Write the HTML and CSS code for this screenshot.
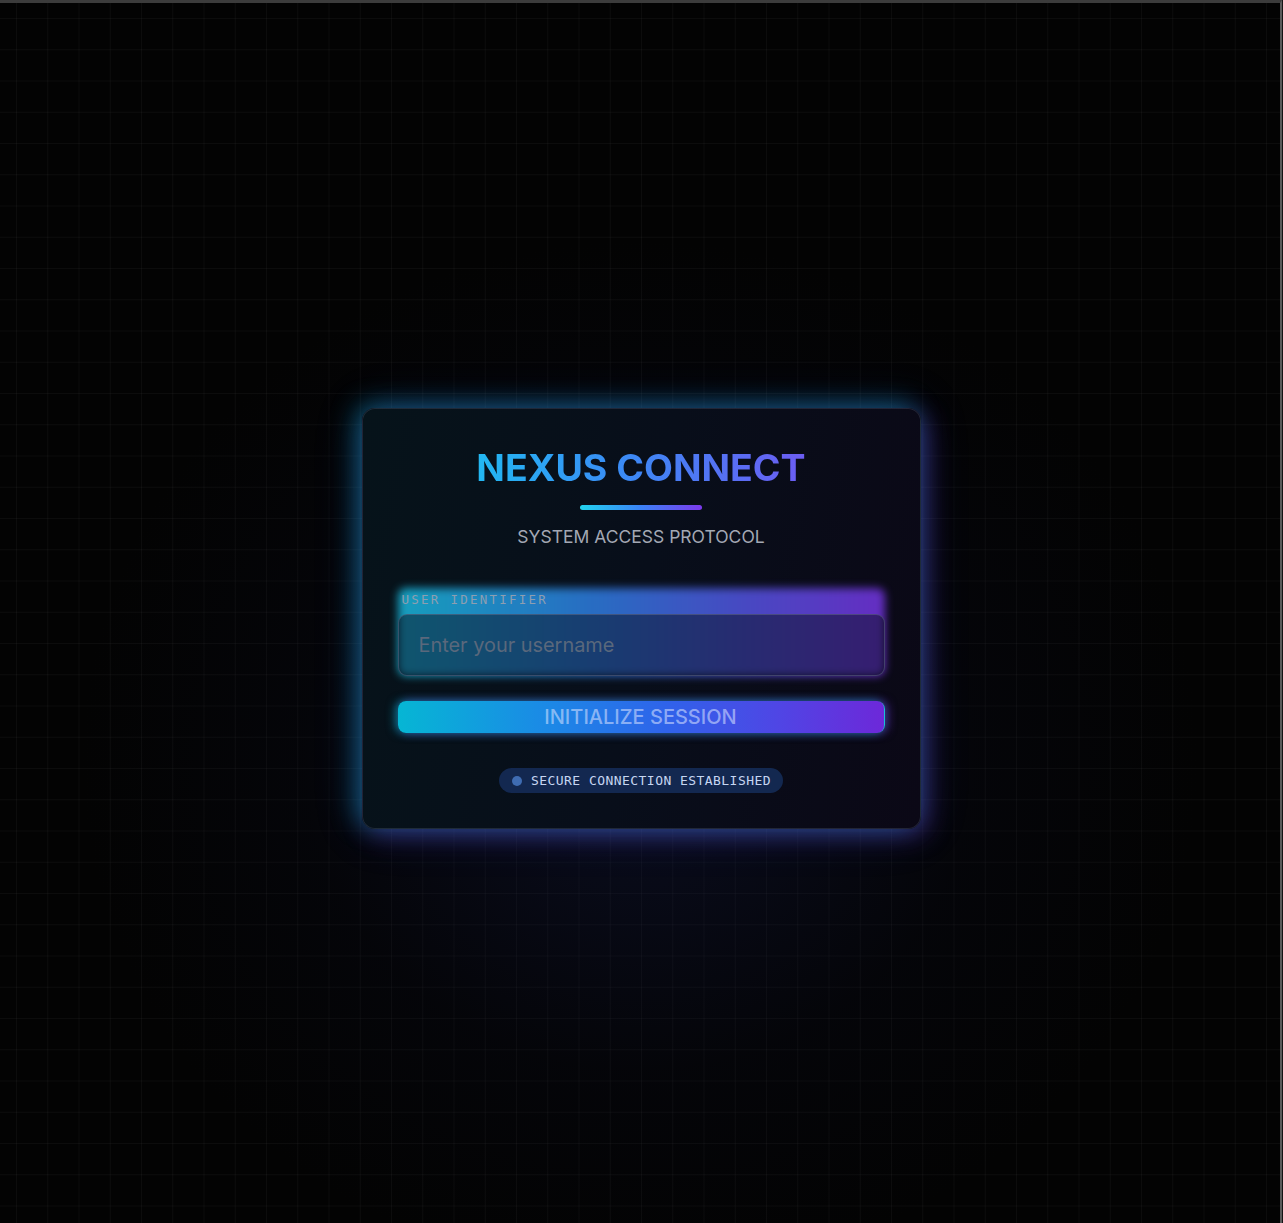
FILE: index.html
```html
<!DOCTYPE html>
<html lang="en">
<head>
<meta charset="utf-8">
<title>Nexus Connect</title>
<link rel="stylesheet" href="styles.css">
</head>
<body>
<div class="screen">
  <main class="card">
    <h1 class="title">NEXUS CONNECT</h1>
    <div class="divider"></div>
    <p class="subtitle">SYSTEM ACCESS PROTOCOL</p>
    <form class="form">
      <div class="field">
        <div class="field-glow"></div>
        <label class="label" for="user">USER IDENTIFIER</label>
        <input class="input" id="user" type="text" placeholder="Enter your username">
      </div>
      <button class="btn" type="button">INITIALIZE SESSION</button>
    </form>
    <div class="status">
      <span class="status-dot"></span>
      <span class="status-text">SECURE CONNECTION ESTABLISHED</span>
    </div>
  </main>
</div>
</body>
</html>
```
FILE: styles.css
```css
* { box-sizing: border-box; }
html, body { margin: 0; height: 100%; }
body {
  background: #141414;
  padding-right: 1px;
  font-family: Inter, "Noto Sans", sans-serif;
}
.screen {
  height: 100%;
  border-top: 3px solid #3c3c3c;
  border-right: 2px solid #5a5a5a;
  background-color: #030303;
  background-image:
    radial-gradient(ellipse 560px 520px at 50% 62%, rgba(24, 32, 84, 0.36), rgba(12, 16, 44, 0.14) 60%, transparent 100%),
    linear-gradient(90deg, rgba(255,255,255,0.035) 1px, transparent 1px),
    linear-gradient(0deg, rgba(255,255,255,0.035) 1px, transparent 1px);
  background-size: 100% 100%, 31.25px 31.25px, 31.25px 31.25px;
  background-position: 0 0, 16px 0, 0 16px;
  display: flex;
  align-items: center;
  justify-content: center;
  padding-top: 11px;
  padding-left: 2px;
}
.card {
  width: 559px;
  height: 421px;
  border-radius: 13px;
  border: 1px solid rgba(120, 130, 170, 0.22);
  background: linear-gradient(100deg, #06131a 0%, #080e1a 50%, #0b0816 100%);
  box-shadow:
    -6px -4px 26px rgba(6, 182, 212, 0.4),
    6px 6px 26px rgba(124, 58, 237, 0.34),
    0 0 50px rgba(59, 90, 220, 0.18);
  padding: 35px 35px 0;
  display: flex;
  flex-direction: column;
  align-items: center;
}
.title {
  margin: 0;
  font-size: 37.5px;
  line-height: 48px;
  font-weight: 700;
  letter-spacing: 0;
  background: linear-gradient(90deg, #22b8f2 0%, #3b8af5 45%, #6c5cf2 100%);
  -webkit-background-clip: text;
  background-clip: text;
  color: transparent;
}
.divider {
  margin-top: 13px;
  width: 122px;
  height: 5px;
  border-radius: 3px;
  background: linear-gradient(90deg, #22d3ee, #3b82f6 50%, #7c3aed);
}
.subtitle {
  margin: 16px 0 0;
  font-size: 17.5px;
  line-height: 22px;
  color: #a3a8b4;
  letter-spacing: 0;
}
.form {
  align-self: stretch;
  margin-top: 42px;
  display: flex;
  flex-direction: column;
}
.field {
  position: relative;
  display: flex;
  flex-direction: column;
}
.field-glow {
  position: absolute;
  left: 0;
  right: 0;
  top: -2px;
  bottom: 0;
  border-radius: 8px;
  background: linear-gradient(90deg, #18a6c6 0%, #2a72cc 40%, #4a4ecc 70%, #6a30cc 100%);
  filter: blur(4px);
  opacity: 0.95;
}
.label {
  position: relative;
  font-family: "DejaVu Sans Mono", monospace;
  font-size: 12.5px;
  line-height: 20px;
  letter-spacing: 2.25px;
  color: #8e9eb0;
  padding-left: 4px;
  margin-bottom: 4px;
}
.input {
  position: relative;
  height: 62px;
  border-radius: 9px;
  border: 1px solid rgba(110, 120, 150, 0.45);
  background: rgba(8, 14, 32, 0.5);
  padding: 0 20px;
  font-family: Inter, sans-serif;
  font-size: 19.9px;
  color: #c8d0e0;
  outline: none;
}
.input::placeholder { color: #5a687c; }
.btn {
  margin-top: 25px;
  height: 32px;
  border: none;
  border-right: 1px solid rgba(34, 195, 216, 0.7);
  border-radius: 8px;
  background: linear-gradient(90deg, #06b6d4 0%, #1b8ae6 30%, #2f63ea 55%, #4f46e5 78%, #6d28d9 100%);
  box-shadow: -3px 0 10px rgba(6, 182, 212, 0.55), 3px 0 10px rgba(124, 58, 237, 0.5);
  color: rgba(215, 225, 255, 0.58);
  font-family: Inter, sans-serif;
  font-size: 20px;
  line-height: 32px;
  font-weight: 500;
  padding: 0;
}
.status {
  margin-top: 35px;
  height: 25px;
  padding: 0 12px 0 13px;
  border-radius: 13px;
  background: #132850;
  display: flex;
  align-items: center;
  gap: 9px;
}
.status-dot {
  width: 10px;
  height: 10px;
  border-radius: 50%;
  background: #3f6cb2;
}
.status-text {
  font-family: "DejaVu Sans Mono", monospace;
  font-size: 13px;
  letter-spacing: 0.45px;
  color: #c6d6f2;
}
```
